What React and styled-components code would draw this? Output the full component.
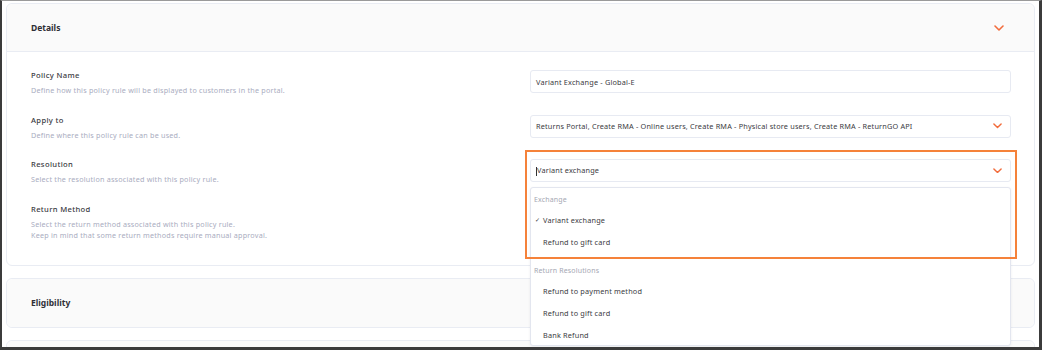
import React from 'react'
import styled, { createGlobalStyle } from 'styled-components'

const GlobalStyle = createGlobalStyle`
    body{
        margin: 0;
        background: #ffffff;
        font-family: "Noto Sans", "Open Sans", sans-serif;
    }
`;

const Chevron = ({ size = 9 }) => (
    <svg width={size} height={size * 0.6} viewBox="0 0 10 6" fill="none">
        <path d="M1 1 L5 5 L9 1" stroke="#f26c3c" strokeWidth="1.6" strokeLinecap="round" strokeLinejoin="round" />
    </svg>
)

const rows = [
    { label: 'Policy Name', desc: ['Define how this policy rule will be displayed to customers in the portal.'] },
    { label: 'Apply to', desc: ['Define where this policy rule can be used.'] },
    { label: 'Resolution', desc: ['Select the resolution associated with this policy rule.'] },
    { label: 'Return Method', desc: ['Select the return method associated with this policy rule.', 'Keep in mind that some return methods require manual approval.'] },
]

const groups = [
    { title: 'Exchange', items: [{ name: 'Variant exchange', checked: true }, { name: 'Refund to gift card' }] },
    { title: 'Return Resolutions', items: [{ name: 'Refund to payment method' }, { name: 'Refund to gift card' }, { name: 'Bank Refund' }] },
]

const App = () => {

    const renderField = (index) => {
        if (index === 0) {
            return <Input>Variant Exchange - Global-E</Input>
        }
        if (index === 1) {
            return (
                <Input>
                    Returns Portal, Create RMA - Online users, Create RMA - Physical store users, Create RMA - ReturnGO API
                    <Chevron />
                </Input>
            )
        }
        if (index === 2) {
            return (
                <>
                    <Input>
                        <span><Caret />Variant exchange</span>
                        <Chevron />
                    </Input>
                    <Menu>
                        {groups.map((group) => (
                            <Group key={group.title}>
                                <GroupTitle>{group.title}</GroupTitle>
                                {group.items.map((item) => (
                                    <Option key={item.name}>
                                        <Check>{item.checked ? '✓' : ''}</Check>
                                        {item.name}
                                    </Option>
                                ))}
                            </Group>
                        ))}
                    </Menu>
                    <Highlight />
                </>
            )
        }
        return null
    }

    return (
        <Frame>
            <GlobalStyle />
            <Card>
                <Header>
                    <Title>Details</Title>
                    <Chevron size={10} />
                </Header>
                <Body>
                    {rows.map((row, i) => (
                        <Row key={row.label}>
                            <div>
                                <Label>{row.label}</Label>
                                {row.desc.map((line) => (
                                    <Desc key={line}>{line}</Desc>
                                ))}
                            </div>
                            <Field>{renderField(i)}</Field>
                        </Row>
                    ))}
                </Body>
            </Card>
            <Card>
                <Header $closed>
                    <Title>Eligibility</Title>
                </Header>
            </Card>
            <Card>
                <Header $closed />
            </Card>
        </Frame>
    )
}

const Frame = styled.div`
    box-sizing: border-box;
    width: 1042px;
    height: 350px;
    border-top: 1px solid #9a9a9a;
    border-left: 2px solid #3b3b3b;
    border-right: 3px solid #3b3b3b;
    border-bottom: 3px solid #3b3b3b;
    padding: 2px 4px 0 4px;
    display: flex;
    flex-direction: column;
    gap: 12px;
    overflow: hidden;
`;

const Card = styled.div`
    border: 1px solid #e9ecf3;
    border-radius: 6px;
    background: #ffffff;
    flex-shrink: 0;
`;

const Header = styled.div`
    height: ${(p) => (p.$closed ? '48px' : '47px')};
    background: #fafafa;
    border-bottom: ${(p) => (p.$closed ? 'none' : '1px solid #e9ecf3')};
    border-radius: ${(p) => (p.$closed ? '6px' : '6px 6px 0 0')};
    display: flex;
    align-items: center;
    justify-content: space-between;
    padding: 0 30px 0 24px;
`;

const Title = styled.h3`
    margin: 0;
    font-size: 8.5px;
    font-weight: 700;
    color: #2f2f36;
`;

const Body = styled.div`
    padding: 18px 23px 24px 24px;
    display: flex;
    flex-direction: column;
    gap: 18.5px;
`;

const Row = styled.div`
    display: flex;
    justify-content: space-between;
    align-items: flex-start;
    min-height: 23px;
`;

const Label = styled.div`
    font-size: 7.6px;
    font-weight: 500;
    letter-spacing: 0.35px;
    color: #3a3a42;
    line-height: 10px;
    margin-bottom: 5px;
`;

const Desc = styled.div`
    font-size: 7.2px;
    letter-spacing: 0.22px;
    color: #a9acc0;
    line-height: 11px;
`;

const Field = styled.div`
    position: relative;
    width: 481px;
`;

const Input = styled.div`
    box-sizing: border-box;
    height: 23px;
    border: 1px solid #e7eaf2;
    border-radius: 3px;
    background: #ffffff;
    display: flex;
    align-items: center;
    justify-content: space-between;
    padding: 0 8px 0 5px;
    font-size: 7.3px;
    letter-spacing: 0.18px;
    color: #3a3a42;
    white-space: nowrap;
`;

const Caret = styled.span`
    display: inline-block;
    width: 1px;
    height: 9px;
    background: #333;
    vertical-align: middle;
`;

const Menu = styled.div`
    position: absolute;
    top: 28px;
    left: 0;
    right: 0;
    z-index: 2;
    box-sizing: border-box;
    height: 159px;
    background: #ffffff;
    border: 1px solid #e3e6ef;
    border-radius: 3px;
    box-shadow: 0 1px 3px rgba(40, 50, 80, 0.08);
    padding-top: 2px;
`;

const Group = styled.div`
    & + & {
        margin-top: 7.5px;
    }
`;

const GroupTitle = styled.div`
    height: 19px;
    line-height: 19px;
    padding-left: 3px;
    font-size: 7px;
    letter-spacing: 0.15px;
    color: #a5a7b3;
`;

const Option = styled.div`
    height: 22px;
    display: flex;
    align-items: center;
    padding-left: 4px;
    font-size: 7.3px;
    letter-spacing: 0.18px;
    color: #3a3a42;
`;

const Check = styled.span`
    width: 8px;
    font-size: 6px;
`;

const Highlight = styled.div`
    position: absolute;
    top: -9px;
    left: -5px;
    right: -6px;
    height: 109px;
    box-sizing: border-box;
    border: 2px solid #f5823a;
    z-index: 3;
    pointer-events: none;
`;

export default App
